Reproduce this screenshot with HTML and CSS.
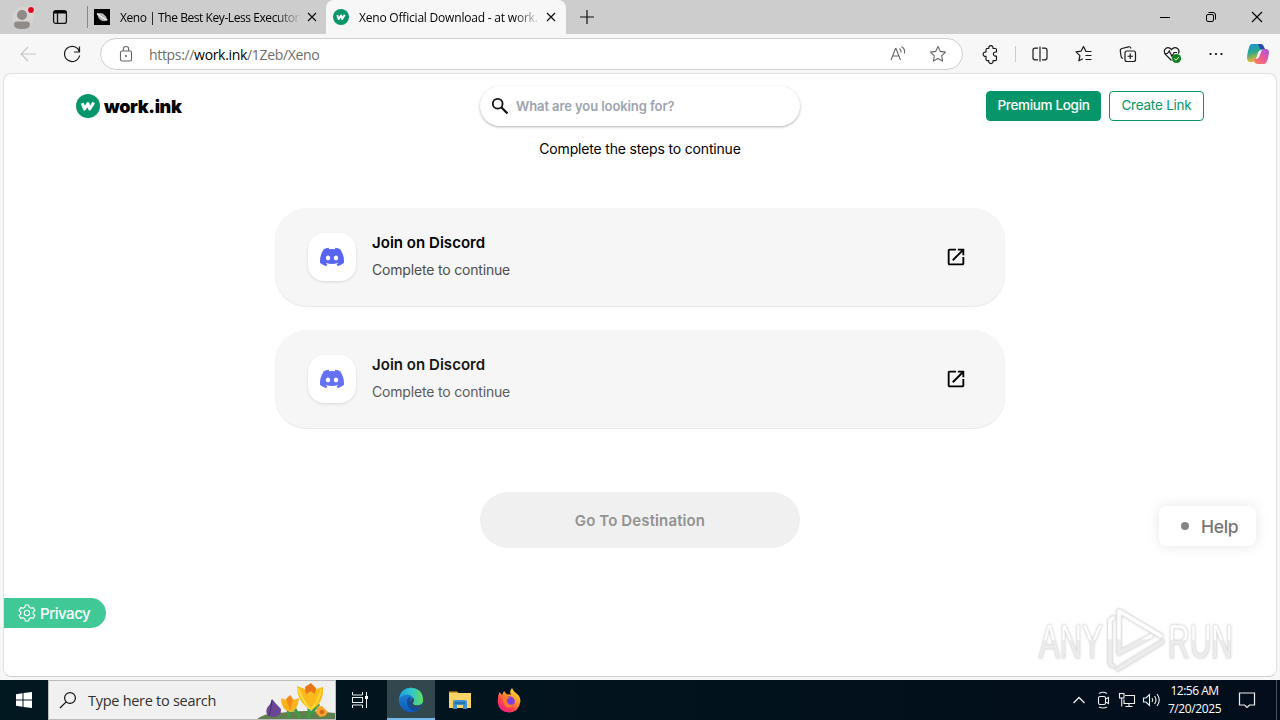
FILE: index.html
```html
<!DOCTYPE html>
<html lang="en">
<head>
    <meta charset="UTF-8">
    <title>Xeno Official Download - at work.ink</title>
    <link rel="stylesheet" href="styles.css">
</head>
<body>

    <svg width="0" height="0" class="defs">
        <defs>
            <symbol id="discord" viewBox="0 0 24 24">
                <path d="M20.317 4.37a19.79 19.79 0 0 0-4.885-1.515.07.07 0 0 0-.079.037c-.21.375-.444.864-.608 1.25a18.27 18.27 0 0 0-5.487 0 12.64 12.64 0 0 0-.617-1.25.077.077 0 0 0-.079-.037A19.74 19.74 0 0 0 3.677 4.37a.07.07 0 0 0-.032.027C.533 9.046-.32 13.58.099 18.057a.08.08 0 0 0 .031.057 19.9 19.9 0 0 0 5.993 3.03.078.078 0 0 0 .084-.028c.462-.63.874-1.295 1.226-1.994a.076.076 0 0 0-.041-.106 13.1 13.1 0 0 1-1.872-.892.077.077 0 0 1-.008-.128c.126-.094.252-.192.372-.292a.074.074 0 0 1 .077-.01c3.928 1.793 8.18 1.793 12.062 0a.074.074 0 0 1 .078.01c.12.098.246.198.373.292a.077.077 0 0 1-.006.127 12.3 12.3 0 0 1-1.873.892.077.077 0 0 0-.041.107c.36.698.772 1.362 1.225 1.993a.076.076 0 0 0 .084.028 19.84 19.84 0 0 0 6.002-3.03.077.077 0 0 0 .032-.054c.5-5.177-.838-9.674-3.549-13.66a.06.06 0 0 0-.031-.03zM8.02 15.33c-1.183 0-2.157-1.085-2.157-2.419s.956-2.419 2.157-2.419c1.21 0 2.176 1.096 2.157 2.42 0 1.333-.956 2.418-2.157 2.418zm7.975 0c-1.183 0-2.157-1.085-2.157-2.419s.955-2.419 2.157-2.419c1.21 0 2.176 1.096 2.157 2.42 0 1.333-.946 2.418-2.157 2.418z"/>
            </symbol>
            <symbol id="external" viewBox="0 0 24 24">
                <path d="M19 19H5V5h7V3H5c-1.110 0-2 .9-2 2v14c0 1.100.89 2 2 2h14c1.100 0 2-.9 2-2v-7h-2v7zM14 3v2h3.590l-9.830 9.830 1.410 1.410L19 6.410V10h2V3h-7z"/>
            </symbol>
            <symbol id="logo" viewBox="0 0 24 24">
                <circle cx="12" cy="12" r="12" fill="#079669"/>
                <path d="M6.300 9.300l2.200 5.700 3.500-5.300 1.700 5.300 4-6.500" fill="none" stroke="#fff" stroke-width="3" stroke-linejoin="round"/>
            </symbol>
            <symbol id="close" viewBox="0 0 10 10">
                <path d="M1 1l8 8M9 1L1 9" fill="none" stroke="#111" stroke-width="1.200"/>
            </symbol>
        </defs>
    </svg>

    <!-- tab strip -->
    <div class="tabs">
        <div class="profile">
            <svg width="24" height="26" viewBox="0 0 24 26"><circle cx="12" cy="13" r="11" fill="#d6d3d1"/><circle cx="11" cy="10" r="5" fill="#8f8b88"/><path d="M3 19.500q0-3 3-3h10q3 0 3 3 0 4.500-8 4.500t-8-4.500z" fill="#8f8b88"/><circle cx="20" cy="5" r="3.800" fill="#f3d5d8"/><circle cx="20" cy="5" r="2.900" fill="#d90d1f"/></svg>
        </div>
        <svg class="workspaces" width="16" height="16" viewBox="0 0 16 16"><rect x="1.600" y="1.600" width="12.800" height="12.800" rx="2.200" fill="none" stroke="#111" stroke-width="1.300"/><path d="M2 3.600h12M5.500 4v10" stroke="#111" stroke-width="1.300"/><path d="M2 2h12v2.300H2z"/></svg>
        <div class="tab">
            <svg width="16" height="16" viewBox="0 0 16 16"><path d="M0 0h16v16H0z"/><path d="M3 4.500l3-.5 3 .5 3 3 1.500 3.500-3 1.200-3.500-.7-2.500-2.500z" fill="#b5b5b5"/><path d="M3 4.500q4 4 10.300 6.700" stroke="#f2f2f2" stroke-width="1.100" fill="none"/></svg>
            <span class="tab-title">Xeno | The Best Key-Less Executor</span>
            <svg width="10" height="10"><use href="#close"/></svg>
        </div>
        <div class="tab active">
            <svg width="16" height="16"><use href="#logo"/></svg>
            <span class="tab-title second">Xeno Official Download - at work.</span>
            <svg width="10" height="10"><use href="#close"/></svg>
        </div>
        <svg class="new-tab" width="14" height="14" viewBox="0 0 14 14"><path d="M7 0v14M0 7h14" stroke="#111" stroke-width="1.200"/></svg>
        <div class="window-buttons">
            <svg width="46" height="34" viewBox="0 0 46 34"><path d="M18 17.500h10" stroke="#000"/></svg>
            <svg width="46" height="34" viewBox="0 0 46 34"><g fill="none" stroke="#000"><rect x="18.500" y="14.500" width="7" height="7" rx="1.500"/><path d="M20.500 12.500h4.500q2.500 0 2.500 2.500v4.500"/></g></svg>
            <svg width="46" height="34" viewBox="0 0 46 34"><path d="M18 12l10 10M28 12L18 22" stroke="#000" stroke-width="1.100"/></svg>
        </div>
    </div>

    <!-- toolbar -->
    <div class="toolbar">
        <svg class="tool" viewBox="0 0 44 32"><path d="M30 16H15M22 9l-7 7 7 7" fill="none" stroke="#c6c6c6" stroke-width="1.200"/></svg>
        <svg class="tool" viewBox="0 0 44 32"><path d="M29.500 14a7.600 7.600 0 1 0 .1 3.500M29.500 8.500V14H24" fill="none" stroke="#1b1b1b" stroke-width="1.200"/></svg>
        <div class="address">
            <svg width="14" height="18" viewBox="0 0 14 18"><g fill="none" stroke="#666" stroke-width="1.100"><rect x="1.500" y="6" width="11" height="10" rx="1.500"/><path d="M4.300 6V4.200a2.700 2.700 0 0 1 5.400 0V6"/></g><circle cx="7" cy="11" r="1" fill="#555"/></svg>
            <span class="url">https://<b>work.ink</b>/1Zeb/Xeno</span>
            <svg class="read" width="18" height="18" viewBox="0 0 18 18"><g fill="none" stroke="#666" stroke-width="1.100"><path d="M2 15L6.500 3.500h.5L11.500 15M3.600 11h6.300M10.500 3.500q2 1.500 1.500 4M12.500 1.500q4 2.500 3 7"/></g></svg>
            <svg width="18" height="18" viewBox="0 0 18 18"><path d="M9 1.600l2.300 4.800 5.200.7-3.800 3.700.9 5.300L9 13.600l-4.600 2.500.9-5.300L1.500 7.100l5.200-.7z" fill="none" stroke="#666" stroke-width="1.100" stroke-linejoin="round"/></svg>
        </div>
        <svg class="tool ext" viewBox="0 0 44 32"><path d="M17.500 10.500h2.300a2.200 2.200 0 1 1 4.200 0h2.300q1.200 0 1.200 1.200v2.300h-1a2.100 2.100 0 1 0 0 4.200h1v3.300q0 1.200-1.200 1.200h-2.300a2.200 2.200 0 1 1-4.200 0h-1.600q-1.200 0-1.200-1.200v-3.200a2.200 2.200 0 1 1 0-4.200v-2.400q0-1.200 1.200-1.200z" fill="none" stroke="#1b1b1b" stroke-width="1.200" stroke-linejoin="round"/></svg>
        <div class="divider"></div>
        <svg class="tool" viewBox="0 0 44 32"><path d="M20 10.200h-3q-2 0-2 2v7.600q0 2 2 2h3M24 10.200h3q2 0 2 2v7.600q0 2-2 2h-3M22 8.500v15" fill="none" stroke="#1b1b1b" stroke-width="1.200"/></svg>
        <svg class="tool" viewBox="0 0 44 32"><path d="M29.500 13.500H24l-2.500-5-2.300 4.600-5.200.8 3.900 3.700-1 5.200 3.900-2M23.500 17.500h6M23.500 21.500h6" fill="none" stroke="#1b1b1b" stroke-width="1.200" stroke-linejoin="round"/></svg>
        <svg class="tool" viewBox="0 0 44 32"><g fill="none" stroke="#1b1b1b" stroke-width="1.200"><rect x="19" y="13" width="10.500" height="10.500" rx="2"/><path d="M24.250 15.500v5.500M21.500 18.250h5.500M17 20.500q-2-.5-2-2.500l-.7-5q-.3-2 1.700-2.500l6.500-1.700q2-.4 2.500 1.700"/></g></svg>
        <svg class="tool" viewBox="0 0 44 32"><path d="M21.500 22.500l-6.300-6.300q-1.900-3.200.3-5.500 3-2.500 6 .8 3-3.300 6.300-.8 2 2.300.7 5M14.500 15.500h3l1.800-2.500 2.700 5.500 2-4h3" fill="none" stroke="#1b1b1b" stroke-width="1.200"/><circle cx="26.500" cy="20.500" r="4.600" fill="#13801f"/><path d="M24.300 20.500l1.600 1.700 3-3.200" fill="none" stroke="#fff"/></svg>
        <svg class="tool" viewBox="0 0 44 32"><circle cx="16.500" cy="16" r="1.100"/><circle cx="22" cy="16" r="1.100"/><circle cx="27.500" cy="16" r="1.100"/></svg>
        <svg class="tool copilot" viewBox="0 0 44 32">
            <defs>
                <linearGradient id="cp1" x2=".3" y2="1"><stop offset="0" stop-color="#1690e2"/><stop offset=".5" stop-color="#2ca78e"/><stop offset="1" stop-color="#f3b92c"/></linearGradient>
                <linearGradient id="cp2" x1="1" x2="0" y2="1"><stop offset="0" stop-color="#a257e6"/><stop offset=".5" stop-color="#eb5799"/><stop offset="1" stop-color="#fc8950"/></linearGradient>
            </defs>
            <path d="M16 6h8q2 0 3 3l1 3h-3q-2 0-3 3l-2 6q-1 3-3 3h-3q-3 0-3-5 .5-6 2.500-11 .6-2 2.500-2z" fill="url(#cp1)"/>
            <path d="M22 6h3q2 0 3 3l1 2h-5z" fill="#244bb4"/>
            <path d="M28 11h2q3 0 3 4-.5 5-2.500 9-.8 2-2.500 2h-7q-2 0-3-3l-.5-2h3q2 0 3-3l2-5q.5-2 2.500-2z" fill="url(#cp2)"/>
        </svg>
    </div>

    <!-- page -->
    <div class="page">
        <header>
            <div class="brand">
                <svg width="24" height="24"><use href="#logo"/></svg>
                <span>work.ink</span>
            </div>
            <div class="search">
                <svg width="18" height="18" viewBox="0 0 18 18"><circle cx="6.700" cy="6.700" r="4.900" fill="none" stroke="#111" stroke-width="1.800"/><path d="M10.500 10.500l6 6" stroke="#111" stroke-width="2.300"/></svg>
                <span>What are you looking for?</span>
            </div>
            <div class="actions">
                <button class="btn login"><span>Premium Login</span></button>
                <button class="btn create"><span>Create Link</span></button>
            </div>
        </header>

        <main>
            <p class="intro">Complete the steps to continue</p>
            <div class="steps">
                <div class="step">
                    <div class="step-icon"><svg width="24" height="24"><use href="#discord"/></svg></div>
                    <div class="step-text">
                        <h3>Join on Discord</h3>
                        <p>Complete to continue</p>
                    </div>
                    <svg width="22" height="22"><use href="#external"/></svg>
                </div>
                <div class="step faded">
                    <div class="step-icon"><svg width="24" height="24"><use href="#discord"/></svg></div>
                    <div class="step-text">
                        <h3>Join on Discord</h3>
                        <p>Complete to continue</p>
                    </div>
                    <svg width="22" height="22"><use href="#external"/></svg>
                </div>
            </div>
            <button class="destination">Go To Destination</button>
        </main>

        <div class="help"><i></i><span>Help</span></div>

        <div class="privacy">
            <svg width="18" height="18" viewBox="0 0 18 18"><g fill="none" stroke="#fff" stroke-width="1.100" stroke-linejoin="round"><path d="M7.300 1h3.400l.5 2.300 1.700 1 2.300-.7 1.700 2.900L15.200 8v2l1.700 1.500-1.700 2.900-2.300-.7-1.700 1-.5 2.300H7.300l-.5-2.300-1.700-1-2.300.7-1.700-2.900L2.800 10V8L1.100 6.500l1.700-2.900 2.300.7 1.700-1z"/><circle cx="9" cy="9" r="2.700"/></g></svg>
            <span>Privacy</span>
        </div>

        <svg class="watermark" width="204" height="72" viewBox="0 0 204 72">
            <defs>
                <linearGradient id="wm" gradientUnits="userSpaceOnUse" x1="0" y1="0" x2="0" y2="72"><stop offset=".5" stop-color="#fff"/><stop offset=".51" stop-color="#ececec"/></linearGradient>
                <linearGradient id="wmt" gradientUnits="userSpaceOnUse" x1="0" y1="-36" x2="0" y2="0"><stop offset=".49" stop-color="#fff"/><stop offset=".5" stop-color="#ececec"/></linearGradient>
            </defs>
            <g class="wm-text" fill="url(#wmt)">
                <text transform="translate(4 55) scale(.58 1)" textLength="110" lengthAdjust="spacingAndGlyphs">ANY</text>
                <text transform="translate(133 55) scale(.58 1)" textLength="112" lengthAdjust="spacingAndGlyphs">RUN</text>
            </g>
            <g fill="none" stroke-linejoin="round" stroke-linecap="round">
                <path d="M78 15l-3 2v42q0 3 3 4M84 50V8l42 25M84 50l32-17M83 66l44-27" stroke="#e4e4e4" stroke-width="5"/>
                <path d="M78 15l-3 2v42q0 3 3 4M84 50V8l42 25M84 50l32-17M83 66l44-27" stroke="url(#wm)" stroke-width="3.400"/>
            </g>
        </svg>
    </div>

    <!-- taskbar -->
    <div class="taskbar">
        <svg class="start" width="48" height="40" viewBox="0 0 48 40"><path d="M16 14.200l6.500-.9v6.200H16zM23.500 13.100L32 12v7.500h-8.500zM16 20.500h6.500v6.200l-6.500-.9zM23.500 20.500H32V28l-8.500-1.100z" fill="#fff"/></svg>
        <div class="task-search">
            <svg width="18" height="18" viewBox="0 0 18 18"><circle cx="11" cy="7" r="5.400" fill="none" stroke="#111" stroke-width="1.200"/><path d="M7.200 10.800L1 17" stroke="#111" stroke-width="1.200"/></svg>
            <span>Type here to search</span>
            <svg class="flowers" width="80" height="38" viewBox="0 0 80 38">
                <path d="M2 38q7-6 22-6 25-4 56 0v6z" fill="#607f4e"/>
                <path d="M54 37V24M34 37l-1-10M52 37l12-14M45 37L40 28" stroke="#3f9b48" stroke-width="3"/>
                <path d="M17 18q-1 5-5 9-3 7 5 9 10 0 9-8-5-5-9-10z" fill="#6b4695"/><path d="M17 19q-1 9-3 16" stroke="#432c70" fill="none"/>
                <path d="M26 17l5 2 4-4 3 4 6-2q-1 13-9 14-9-2-9-14z" fill="#fbb41c"/><path d="M31 18l4-4 3 4-3 11z" fill="#f28a18"/>
                <path d="M42 5l8 3 5-5 6 5 7-2q1 17-12 23-14-8-14-24z" fill="#fbb91b"/><path d="M50 6l6-4 5 5-1 6-4-3-5 3z" fill="#e87518"/><path d="M43 7q4 12 12 21" stroke="#ffdf48" stroke-width="2" fill="none"/><path d="M66 8q-2 13-10 20" stroke="#ffd72e" stroke-width="2" fill="none"/>
                <path d="M62 26l5-1 3 3 3 3-3 4-5 1-4-4z" fill="#f6a42c"/><circle cx="67" cy="31" r="2.200" fill="#cf691f"/>
            </svg>
        </div>
        <svg width="51" height="40" viewBox="0 0 51 40"><g fill="none" stroke="#e8eeee"><path d="M16.500 12v3h10v-3M16.500 28v-3h10v3"/><rect x="16.500" y="17.500" width="10" height="5"/><path d="M30.500 12v16"/></g><path d="M29 16h3v3h-3z" fill="#fff"/></svg>
        <div class="app running">
            <svg width="26" height="26" viewBox="0 0 26 26">
                <defs>
                    <linearGradient id="e1" x2="1"><stop offset="0" stop-color="#1ca0df"/><stop offset=".5" stop-color="#2ec6cf"/><stop offset="1" stop-color="#66df54"/></linearGradient>
                    <linearGradient id="e2" x2="0" y2="1"><stop offset="0" stop-color="#1d8dd9"/><stop offset="1" stop-color="#1059b5"/></linearGradient>
                </defs>
                <circle cx="13" cy="13" r="12.200" fill="url(#e2)"/>
                <path d="M1 12Q3 1 13 .8q11 .5 12.200 11.200.2 6.500-6.500 6.500-4 0-4-2 1.500-1.300 1.300-3.500Q15 8 9 7.500 3.500 8 1 12z" fill="url(#e1)"/>
                <path d="M9 13q1-3 4-3-2 3 0 6 3 4 10.500 2.500-2 4-6.500 5.800Q8 22 9 13z" fill="#124b98"/>
                <path d="M15.500 11q1 2.500-.8 5.500 1 2 4.300 2 3.500 0 5.300-2l-.6 3q-8 3-11-3-1.500-4 2.800-5.500z" fill="#35484f"/>
            </svg>
        </div>
        <div class="app">
            <svg width="22" height="20" viewBox="0 0 22 20"><path d="M0 1.500h8l2 2H0z" fill="#e69b1c"/><path d="M0 3h22v15H0z" fill="#fbd367"/><path d="M4 19v-7q0-2 2-2h10q2 0 2 2v7h-4v-4H8v4z" fill="#3f91cf"/><path d="M6 12h10v2H6z" fill="#2173ad"/></svg>
        </div>
        <div class="app">
            <svg width="24" height="25" viewBox="0 0 24 25">
                <defs><linearGradient id="ff" x1=".9" x2=".2" y2="1"><stop offset="0" stop-color="#fff23d"/><stop offset=".4" stop-color="#ff9a28"/><stop offset=".72" stop-color="#ff3d50"/><stop offset="1" stop-color="#e8198c"/></linearGradient></defs>
                <path d="M2.500 4l2.500 3 2-4 3 3.500q3-.5 4 .5-2-4 1-7 1 3 4.500 5.500Q24 9 23.300 14q-1.500 10-11.300 10.500Q2 24 .7 14.500.5 8 2.500 4z" fill="url(#ff)"/>
                <circle cx="12.500" cy="13.500" r="5.300" fill="#7e3fe0"/><path d="M6 9q4-2 7 1-4 0-3 4 2 4 7 2-2 4-6.500 3.500Q5.500 17 6 9z" fill="#ff7b2c"/>
            </svg>
        </div>
        <div class="tray">
            <svg width="24" height="40" viewBox="0 0 24 40"><path d="M6.500 23l5.500-5.500 5.500 5.500" fill="none" stroke="#eee" stroke-width="1.300"/></svg>
            <svg width="24" height="40" viewBox="0 0 24 40"><g fill="none" stroke="#eee" stroke-width="1.100"><rect x="7.500" y="16.500" width="7" height="8" rx="1.500"/><path d="M14.500 19l3-1.500v6l-3-1.500M8 13.500q4-2.500 8 0M8 27q4 2 8 0"/></g></svg>
            <svg width="24" height="40" viewBox="0 0 24 40"><g fill="none" stroke="#eee" stroke-width="1.100"><path d="M10 15.500h9.500v8H9v-4M14 23.500v3M10.500 26.500h7"/><rect x="4.500" y="13.500" width="4.500" height="4.500"/><path d="M6.700 18v8.500"/></g></svg>
            <svg width="24" height="40" viewBox="0 0 24 40"><g fill="none" stroke="#eee" stroke-width="1.100"><path d="M4.500 18h2.500l3.500-3.500v11L7 22H4.500zM13 18q1.500 2 0 4M15.500 16q3 4 0 8M18 14q4.500 6 0 12"/></g></svg>
            <div class="clock"><span>12:56 AM</span><span class="date">7/20/2025</span></div>
            <svg width="50" height="40" viewBox="0 0 50 40"><path d="M17.500 13h15v12h-5l-2.500 2.500-2.500-2.500h-5z" fill="none" stroke="#eee" stroke-width="1.200"/></svg>
            <div class="peek"></div>
        </div>
    </div>

</body>
</html>
```
FILE: styles.css
```css
* {
    margin: 0;
    padding: 0;
    box-sizing: border-box;
}

body {
    width: 1280px;
    height: 720px;
    overflow: hidden;
    background: #f7f7f7;
    font-family: Inter, sans-serif;
    color: #000;
}

svg {
    flex-shrink: 0;
    display: block;
}

span {
    white-space: nowrap;
}

.defs {
    position: absolute;
}

/* tab strip */
.tabs {
    display: flex;
    align-items: center;
    height: 34px;
    background: #cdcdcd;
    font: 12px "Open Sans", sans-serif;
}

.profile {
    margin: 1px 0 0 11px;
    width: 41px;
}

.workspaces {
    margin-right: 19px;
}

.tab {
    display: flex;
    align-items: center;
    height: 34px;
    width: 239px;
    padding: 0 9px 0 6px;
    border-left: 1px solid #999;
    border-image: linear-gradient(transparent 7px, #888 7px, #888 27px, transparent 27px) 1;
}

.tab.active {
    width: 240px;
    padding: 0 10px 0 7px;
    background: #f7f7f7;
    border: none;
    border-radius: 8px 8px 0 0;
}

.tab-title {
    width: 179px;
    margin: 0 8px 0 10px;
    letter-spacing: -0.43px;
    -webkit-mask-image: linear-gradient(to right, #000 155px, transparent 182px);
    mask-image: linear-gradient(to right, #000 155px, transparent 182px);
}

.tab-title.second {
    letter-spacing: -0.2px;
}

.new-tab {
    margin-left: 14px;
}

.window-buttons {
    display: flex;
    margin-left: auto;
}

/* toolbar */
.toolbar {
    display: flex;
    align-items: center;
    height: 39px;
    padding: 1px 0 0 6px;
    background: #f7f7f7;
}

.tool {
    width: 44px;
    height: 32px;
}

.address {
    display: flex;
    flex-shrink: 0;
    align-items: center;
    width: 863px;
    height: 32px;
    margin-left: 6px;
    padding: 0 15px 0 18px;
    background: #fff;
    border: 1px solid #cfcfcf;
    border-radius: 16px;
}

.url {
    margin-left: 16px;
    font: 14px "Open Sans", sans-serif;
    letter-spacing: -0.33px;
    color: #6d6d6d;
}

.url b {
    font-weight: normal;
    color: #000;
}

.read {
    margin: 0 22px 0 auto;
}

.ext {
    margin-left: 6px;
}

.divider {
    flex-shrink: 0;
    width: 1px;
    height: 16px;
    margin: 0 2px;
    background: #ccc;
}

.copilot {
    margin-left: -2px;
}

/* page */
.page {
    position: relative;
    width: 1274px;
    height: 604px;
    margin: 0 3px;
    background: #fff;
    border: 1px solid #e1e1e1;
    border-bottom-color: #d0d0d0;
    border-radius: 8px;
}

header {
    display: grid;
    grid-template-columns: 1fr 320px 1fr;
    align-items: center;
    height: 64px;
    padding: 0 72px;
}

.brand {
    display: flex;
    align-items: center;
    gap: 4px;
    font-size: 18px;
    font-weight: 900;
    letter-spacing: -0.38px;
}

.search {
    display: flex;
    align-items: center;
    gap: 7px;
    height: 40px;
    padding-left: 11px;
    border-radius: 20px;
    box-shadow: 0 1px 3px rgba(0, 0, 0, 0.22), 0 1px 2px rgba(0, 0, 0, 0.1);
    color: #9ca3af;
    font-size: 13px;
    font-weight: 600;
    letter-spacing: -0.09px;
}

.actions {
    display: flex;
    justify-content: flex-end;
    gap: 8px;
}

.btn {
    height: 30px;
    padding-bottom: 2px;
    border: 1px solid #079669;
    border-radius: 4px;
    font-family: inherit;
    font-size: 13.5px;
}

.login {
    width: 115px;
    background: #079669;
    color: #fff;
    font-weight: 500;
    letter-spacing: -0.33px;
}

.create {
    width: 95px;
    background: #fff;
    color: #079669;
    letter-spacing: -0.22px;
}

main {
    display: flex;
    flex-direction: column;
    align-items: center;
}

.intro {
    height: 22px;
    font-size: 14px;
    line-height: 22px;
    letter-spacing: -0.17px;
}

.steps {
    display: flex;
    flex-direction: column;
    gap: 24px;
    margin-top: 48px;
}

.step {
    display: flex;
    align-items: center;
    width: 730px;
    height: 98px;
    padding: 0 38px 0 33px;
    border-radius: 32px;
    background: #f6f6f6;
    box-shadow: 0 1px 1px rgba(0, 0, 0, 0.1);
}

.step-icon {
    display: flex;
    align-items: center;
    justify-content: center;
    width: 48px;
    height: 48px;
    border-radius: 16px;
    background: #fff;
    box-shadow: 0 1px 3px rgba(0, 0, 0, 0.12);
    fill: #5865f2;
}

.step-text {
    flex: 1;
    margin-left: 16px;
    padding-bottom: 3px;
}

.step h3 {
    font-size: 15px;
    line-height: 24px;
    font-weight: 600;
    letter-spacing: 0.03px;
}

.step p {
    margin-top: 5px;
    font-size: 14px;
    line-height: 20px;
    letter-spacing: -0.18px;
    color: #4d4d4d;
}

.faded h3 {
    color: #161616;
}

.faded p {
    color: #5b5b5b;
}

.faded .step-icon {
    fill: #6571f3;
}

.destination {
    width: 320px;
    height: 56px;
    margin-top: 64px;
    border: none;
    border-radius: 28px;
    background: #f0f0f0;
    color: #929292;
    font: 600 15px Inter, sans-serif;
    letter-spacing: 0.12px;
}

/* floating widgets */
.help {
    position: absolute;
    right: 20px;
    bottom: 130px;
    display: flex;
    align-items: center;
    width: 97px;
    height: 40px;
    padding-left: 22px;
    gap: 12px;
    border-radius: 8px;
    background: #fff;
    box-shadow: 0 0 14px rgba(0, 0, 0, 0.1);
    color: #757575;
    font-size: 17.5px;
    font-weight: 500;
    letter-spacing: -0.3px;
}

.help i {
    width: 8px;
    height: 8px;
    border-radius: 50%;
    background: #858585;
}

.privacy {
    position: absolute;
    left: 0;
    bottom: 48px;
    display: flex;
    align-items: center;
    gap: 4px;
    width: 102px;
    height: 30px;
    padding-left: 14px;
    border-radius: 0 15px 15px 0;
    background: #40c997;
    color: #fff;
    font-size: 15px;
    font-weight: 500;
    letter-spacing: -0.45px;
}

.watermark {
    position: absolute;
    right: 37px;
    bottom: 1px;
    filter: drop-shadow(0 0 1px rgba(0, 0, 0, 0.22));
}

.wm-text {
    font: 48px "Liberation Sans", sans-serif;
    stroke: #e6e6e6;
    stroke-width: 0.6;
}

/* taskbar */
.taskbar {
    display: flex;
    height: 40px;
    margin-top: 3px;
    background: linear-gradient(to right, #021820, #02131d 50%, #030d1b);
    color: #fff;
    font-family: "Open Sans", sans-serif;
}

.task-search {
    display: flex;
    align-items: center;
    width: 288px;
    padding-left: 10px;
    border: 1px solid #bcbcbc;
    background: #f0f0f0;
    color: #303030;
    font-size: 14.5px;
}

.task-search span {
    margin-left: 11px;
    letter-spacing: -0.28px;
}

.flowers {
    margin-left: auto;
}

.app {
    display: flex;
    align-items: center;
    justify-content: center;
    width: 48px;
    height: 40px;
    margin-right: 1px;
}

.running {
    background: #33474f;
    border-bottom: 2px solid #76b9ed;
    padding-top: 2px;
}

.tray {
    display: flex;
    margin-left: auto;
}

.clock {
    display: flex;
    flex-direction: column;
    align-items: center;
    width: 59px;
    margin-left: 2px;
    padding-top: 2px;
    font-size: 12px;
    line-height: 18px;
    letter-spacing: -0.5px;
}

.date {
    letter-spacing: -0.4px;
}

.clock + svg {
    margin-left: -2px;
}

.peek {
    width: 4px;
    margin-left: 4px;
    border-left: 1px solid #4a525c;
}
```
